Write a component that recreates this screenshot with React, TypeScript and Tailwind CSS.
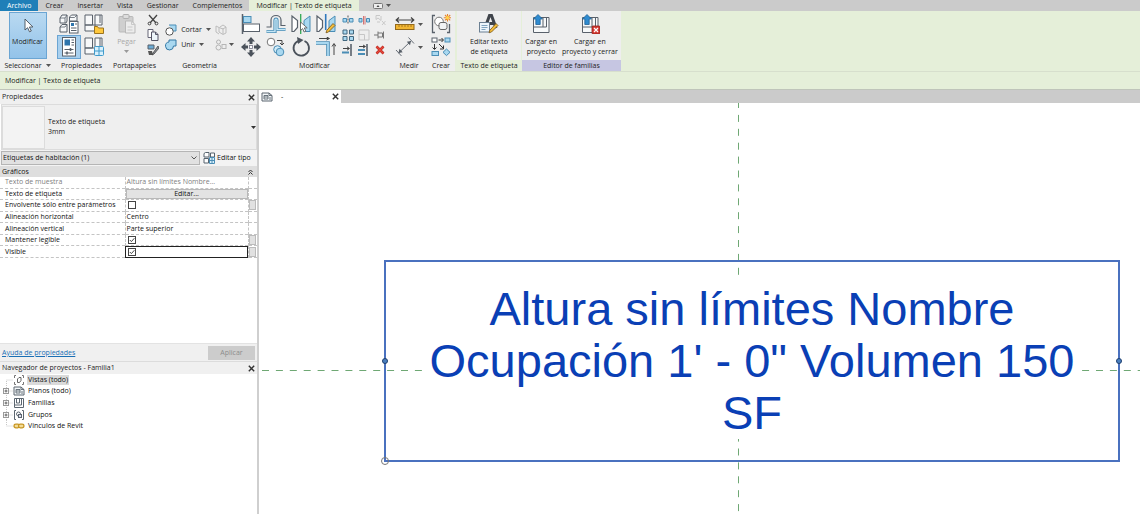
import { useState, type ReactNode } from 'react'
import clsx from 'clsx'

const BLUE = '#a9d8f0'
const BLUE_LINE = '#4a8db5'
const INK = '#59616b'

function Icon({ size = 20, className, children }: { size?: number; className?: string; children: ReactNode }) {
  return (
    <svg
      viewBox={`0 0 ${size} ${size}`}
      width={size}
      height={size}
      fill="none"
      aria-hidden="true"
      className={clsx('block shrink-0', className)}
    >
      {children}
    </svg>
  )
}

function Caret({ className = 'fill-[#555]' }: { className?: string }) {
  return (
    <svg viewBox="0 0 5 3" width={5} height={3} aria-hidden="true" className={clsx('shrink-0', className)}>
      <path d="M0 0h5L2.5 3z" />
    </svg>
  )
}

function Close() {
  return (
    <svg viewBox="0 0 7 7" width={7} height={7} aria-hidden="true" className="block">
      <path d="M.8.8l5.4 5.4M6.2.8L.8 6.2" stroke="#333" strokeWidth="1.4" />
    </svg>
  )
}

const CursorIcon = () => (
  <Icon>
    <path d="M7 3v11l2.600-2.300 1.900 4.100 1.800-.8-1.900-4h3.500z" fill="#fff" stroke="#46505a" strokeWidth=".9" />
  </Icon>
)

/* Propiedades */
const CategoryIcon = () => (
  <Icon>
    <path d="M1 4l2-3h5v6L7 9H1zM10.500 3l2-2h5.500v6h-7.500zM1 13l2-2.500h5V18H1z" fill="#f6f8fa" stroke={INK} />
    <path d="M1 4h5l2-3M6 4v5M10.500 3.500h5l2.500-2.500M1 13h5l2-2.500" stroke={INK} strokeWidth=".8" />
    <rect x="10.500" y="7.500" width="8.500" height="11.500" fill="#fff" stroke={INK} />
    <rect x="12" y="9" width="3" height="3" fill="#2d74ac" />
    <path d="M16 10h2M12 14h5.500M12 16.500h5.500" stroke={INK} />
  </Icon>
)
const FamilyTypeIcon = () => (
  <Icon>
    <path d="M1 1h7.500v10H1zM11 1h7v10h-7zM1 11h10v6H1z" fill="#f8f9fa" stroke={INK} />
    <path d="M16 1v8" stroke={INK} />
    <path d="M10.500 12.500h3l1 1.500h5v5.500h-9z" fill="#ffc83d" stroke="#9c7420" />
  </Icon>
)
const PropertiesIcon = () => (
  <Icon>
    <rect x="3.500" y=".5" width="13" height="18.500" fill="#fff" stroke={INK} />
    <rect x="5.500" y="2.500" width="5.500" height="6" fill="#2d74ac" />
    <path d="M12.500 3h2.500M12.500 5.500h2.500M12.500 8h2.500M5.500 12.500h9M5.500 16h9" stroke={INK} />
    <path d="M11.500 11v3M8 14.500v3" stroke={INK} strokeWidth="1.600" />
  </Icon>
)
const TypePropsIcon = () => (
  <Icon>
    <path d="M1 1h7.500v10H1zM11 1h7v9h-7zM1 11h10v6H1z" fill="#f8f9fa" stroke={INK} />
    <path d="M16 1v8" stroke={INK} />
    <rect x="10.500" y="9.500" width="9" height="9" rx="1" fill="#d8f0fc" stroke="#3f9acb" />
    <path d="M15 9.500v9M10.500 14h9" stroke="#3f9acb" />
  </Icon>
)

/* Portapapeles */
const PasteIcon = () => (
  <Icon>
    <rect x="2" y="2.500" width="14" height="15.500" rx="1" fill="#cfcfcf" stroke="#b9b9b9" />
    <rect x="6" y=".5" width="6" height="4" rx="1" fill="#ddd" stroke="#b0b0b0" />
    <path d="M8.500 7h6l3.500 3.500V19H8.500z" fill="#ececec" stroke="#b9b9b9" />
    <path d="M14.500 7v3.500H18M10.500 13h5M10.500 16h5" stroke="#c8c8c8" />
  </Icon>
)
const CutIcon = () => (
  <Icon size={12}>
    <path d="M2 1l7 8M10 1L3 9" stroke="#444" strokeWidth="1.300" />
    <circle cx="2.500" cy="9.500" r="1.400" stroke="#444" />
    <circle cx="9.500" cy="9.500" r="1.400" stroke="#444" />
  </Icon>
)
const CopyClipIcon = () => (
  <Icon size={12}>
    <path d="M1 .5h5v8H1z" fill="#fff" stroke="#667" />
    <path d="M4.500 3h4l2.500 2.500v6H4.500z" fill="#eef6fb" stroke="#556" />
    <path d="M8.500 3v2.500H11" stroke="#556" />
  </Icon>
)
const MatchIcon = () => (
  <Icon size={12}>
    <path d="M1 1h6v4H1z" fill="#6aaad4" stroke={INK} />
    <path d="M1 7h4l1 4H2z" fill="#555" />
    <path d="M11 2L6 9l-1 2 2-1 5-6z" fill="#8a8f96" stroke="#444" strokeWidth=".8" />
  </Icon>
)

/* Geometria */
const CutGeometryIcon = () => (
  <Icon size={12}>
    <path d="M4 1h7v6H8" fill={BLUE} stroke={BLUE_LINE} />
    <circle cx="4.500" cy="7.500" r="3.700" fill="#fff" stroke="#555" />
  </Icon>
)
const JoinGeometryIcon = () => (
  <Icon size={12}>
    <path d="M4 1h7v6H8.500a4 4 0 1 1-4.500-4z" fill={BLUE} stroke="#3478a5" />
  </Icon>
)
const CopeIcon = () => (
  <Icon size={12}>
    <path d="M1 2l3 1.500V8l4 2.500L11 9V3L8 1 5 3M1 2v6l3 2M8 4v6M4 3.500L8 5l3-2" stroke="#bcbcbc" />
  </Icon>
)
const SplitFaceIcon = () => (
  <Icon size={12}>
    <circle cx="3.500" cy="3" r="2" stroke="#b5b5b5" />
    <circle cx="3.500" cy="8.500" r="2.500" stroke="#b5b5b5" />
    <rect x="7" y="5.500" width="4" height="4" stroke="#b5b5b5" />
  </Icon>
)

/* Modificar */
const AlignIcon = () => (
  <Icon>
    <path d="M1.500 0v20" stroke={INK} strokeWidth="1.500" />
    <rect x="2.500" y="2.500" width="7.500" height="6" fill={BLUE} stroke={BLUE_LINE} />
    <rect x="2.500" y="10" width="16" height="7.500" fill="#fff" stroke={INK} />
  </Icon>
)
const OffsetIcon = () => (
  <Icon>
    <path d="M.5 13H5V6c0-6 10-6 10 0v5.500h4.500" stroke={INK} strokeWidth="1.200" />
    <path d="M.5 17.500H9V6.500c0-1.800 2-1.800 2 0v9h8.500" stroke={BLUE_LINE} strokeWidth="3.200" />
    <path d="M.5 17.500H9V6.500c0-1.800 2-1.800 2 0v9h8.500" stroke="#c6e7f6" strokeWidth="1.400" />
  </Icon>
)
const MirrorAxisIcon = () => (
  <Icon>
    <path d="M1 2v15.500h2l3.500-4V6.500z" fill="#fff" stroke={INK} strokeWidth="1.200" />
    <path d="M19 2v15.500h-6V6.500z" fill={BLUE} stroke={BLUE_LINE} />
    <path d="M9.700 0v20" stroke="#32a852" strokeWidth="1.300" />
    <path d="M9.500 8v8.500l2.100-1.900 1.600 3.400 1.700-.8-1.600-3.300h2.900z" fill="#fff" stroke="#555" strokeWidth=".8" />
  </Icon>
)
const MirrorDrawIcon = () => (
  <Icon>
    <path d="M1 2v15.500h2l3.500-4V6.500z" fill="#fff" stroke={INK} strokeWidth="1.200" />
    <path d="M19 2v15.500h-6V6.500z" fill={BLUE} stroke={BLUE_LINE} />
    <path d="M9.700 0v16" stroke="#2f78bd" strokeWidth="1.600" />
    <path d="M17 9.500l2 2-6.500 6.500-2.500.8.800-2.500z" fill="#f5bd3a" stroke="#765418" strokeWidth=".8" />
  </Icon>
)
const MoveIcon = () => (
  <Icon>
    <path
      d="M10 0l4 4.500h-2.500V7h-3V4.500H6zM10 20l4-4.500h-2.500V13h-3v2.500H6zM0 10l4.500-4v2.500H7v3H4.500V14zM20 10l-4.500-4v2.500H13v3h2.500V14z"
      fill="#4b525b"
    />
    <rect x="8.500" y="8.500" width="3" height="3" fill="#fff" stroke="#778" strokeWidth=".8" />
  </Icon>
)
const CopyIcon = () => (
  <Icon>
    <circle cx="5" cy="5" r="3.800" fill="#fff" stroke="#777" />
    <path d="M11 3.500h5v4M14 6l2 2 2-2" stroke="#444" />
    <circle cx="11.500" cy="12.500" r="3.800" fill="#d3ecf8" stroke={BLUE_LINE} />
    <circle cx="14" cy="15" r="3.800" fill={BLUE} stroke={BLUE_LINE} />
  </Icon>
)
const RotateIcon = () => (
  <Icon>
    <path d="M7.500 3.800A7.700 7.700 0 1 0 13.500 4" stroke="#4b525b" strokeWidth="1.800" />
    <path d="M6 0l6.500 3L7 7z" fill="#4b525b" />
  </Icon>
)
const TrimCornerIcon = () => (
  <Icon>
    <path d="M0 6h12v13" stroke={BLUE_LINE} strokeWidth="3.600" />
    <path d="M0 6h12v13" stroke={BLUE} strokeWidth="1.800" />
    <path d="M3 1.500h10M10.500 0l3 1.500-3 1.500M18 18V7M16 9.500l2-3 2 3" stroke="#444" />
  </Icon>
)
const SplitIcon = () => (
  <Icon size={12}>
    <path d="M1 4.500h3.500v3.500H1zM7.500 4.500H11v3.500H7.500z" fill={BLUE} stroke={BLUE_LINE} />
    <path d="M6 1.500v9" stroke="#555" strokeDasharray="2 1" />
  </Icon>
)
const SplitGapIcon = () => (
  <Icon size={12}>
    <path d="M1 4.500h3v3.500H1zM8.500 4.500h3v3.500h-3z" fill={BLUE} stroke={BLUE_LINE} />
    <path d="M5.500 2v8.500M7 2v8.500" stroke="#c55" strokeWidth=".8" />
  </Icon>
)
const UnpinIcon = () => (
  <Icon size={12}>
    <path d="M2 1.500h4M2 1.500v4l2-1.500 3 2.500V2M8 7l3.500 4M11.500 7L8 11M3 8h3" stroke="#c8c8c8" />
  </Icon>
)
const ArrayIcon = () => (
  <Icon size={12}>
    <path d="M1 1h4v4H1zM7.500 1h4v4h-4zM1 7.500h4v4H1zM7.500 7.500h4v4h-4z" fill={BLUE} stroke="#42677e" />
  </Icon>
)
const ScaleIcon = () => (
  <Icon size={12}>
    <path d="M1 1h10v10H1zM1 5.500h5.500V11" stroke="#c6c6c6" />
  </Icon>
)
const PinIcon = () => (
  <Icon size={12}>
    <path d="M0 6h4M4 2.500v7M4 4h4.500v4H4M9.500 2.500v7" stroke="#777" />
  </Icon>
)
const TrimOneIcon = () => (
  <Icon size={12}>
    <path d="M0 8.500h7" stroke={BLUE_LINE} strokeWidth="2" />
    <path d="M9 0v12" stroke={INK} strokeWidth="1.600" />
    <path d="M1 4.500h6M5 2.800L7.500 4.500 5 6.200" stroke="#444" />
  </Icon>
)
const TrimManyIcon = () => (
  <Icon size={12}>
    <path d="M0 6h7M0 10h7" stroke={BLUE_LINE} strokeWidth="2" />
    <path d="M9 0v12" stroke={INK} strokeWidth="1.600" />
    <path d="M1 2.500h6M5 1l2.500 1.500L5 4" stroke="#444" />
  </Icon>
)
const DeleteIcon = () => (
  <Icon size={12}>
    <path d="M2.500 2.500l7 7M9.500 2.500l-7 7" stroke="#b5281e" strokeWidth="2.600" />
    <path d="M2.500 2.500l7 7M9.500 2.500l-7 7" stroke="#e8483c" strokeWidth="1.400" />
  </Icon>
)

/* Medir, Crear */
const MeasureIcon = () => (
  <Icon>
    <path d="M1 6h18M4 3.500L1.200 6 4 8.500M16 3.500L18.800 6 16 8.500" stroke="#444" strokeWidth="1.200" />
    <rect x=".5" y="10.500" width="18.500" height="5" fill="#f2b632" stroke="#94691a" />
    <path d="M4 11v2M7 11v2M10 11v2M13 11v2M16 11v2" stroke="#94691a" strokeWidth=".8" />
  </Icon>
)
const AlignedDimIcon = () => (
  <Icon>
    <path d="M3.500 16L16 4M1 13l5.500 6M13.500.5l5.500 6" stroke="#666d76" />
    <path d="M3.500 16l1-4.200 3.200 3.400zM16 4l-4.200.8 3.200 3.400z" fill="#555d66" />
  </Icon>
)
const CreateGroupIcon = () => (
  <Icon>
    <path d="M4 1.500H1.500v17H4M16 18.500h2.500V10" stroke={INK} strokeWidth="1.300" />
    <circle cx="8" cy="7.500" r="4.300" fill="#fff" stroke="#777" />
    <rect x="8" y="8.500" width="8" height="7" rx="2" fill="#f1f3f5" stroke="#666" />
    <path d="M16.500 0v7.500M12.800 3.700h7.200M14 1l5.200 5.400M19.200 1L14 6.400" stroke="#e8862c" strokeWidth="1.100" />
    <circle cx="16.500" cy="3.700" r="1.700" fill="#ffd24a" />
  </Icon>
)
const CreateSimilarIcon = () => (
  <Icon>
    <rect x="1" y="1" width="5" height="4" fill="#fff" stroke={INK} />
    <rect x="14" y="1" width="5" height="4" fill={BLUE} stroke={BLUE_LINE} />
    <rect x="1" y="14.500" width="6.500" height="4" fill={BLUE} stroke={BLUE_LINE} />
    <path d="M15.500 12l3.500 3.300-3.500 3.300-3.500-3.300z" fill={BLUE} stroke={BLUE_LINE} />
    <path d="M7.500 3H12M10.500 1l2 2-2 2M3.500 7v5M1.500 10.500l2 2 2-2M8 7l4 4M12.500 8.500V12H9" stroke="#333" />
  </Icon>
)
const EditLabelIcon = () => (
  <Icon>
    <path d="M6 14L10.500 1.500h2L17 14M8.500 9.500h6.500" stroke="#3f444b" strokeWidth="3" />
    <rect x=".5" y="8.500" width="10" height="9.500" fill="#eef6fc" stroke="#6b7f92" />
    <path d="M2.500 11.500h6M2.500 13.500h6M2.500 15.500h4" stroke="#6690b0" strokeWidth=".8" />
    <path d="M17 9.500l2 2-6.500 6.500-2.500.8.800-2.500z" fill="#f5bd3a" stroke="#765418" strokeWidth=".8" />
  </Icon>
)
const LoadIcon = ({ close = false }: { close?: boolean }) => (
  <Icon>
    <path d="M2.500 3.500h15.500v15h-15.500z" fill="#f7f9fa" stroke={INK} />
    <path d="M12 3.500v9.500h-9.500M15.500 3.500V13H12" stroke={INK} />
    <path d="M7 .5l4.500 4.500H9.200v5.500H4.800V5H2.500z" fill="#2f8bd0" stroke="#1f6298" strokeWidth=".8" />
    {close && (
      <>
        <rect x="12" y="12" width="8" height="8" rx="1" fill="#d33a32" stroke="#8f1d18" strokeWidth=".8" />
        <path d="M14 14l4 4M18 14l-4 4" stroke="#fff" strokeWidth="1.200" />
      </>
    )}
  </Icon>
)

/* Navegador */
const ViewsIcon = () => (
  <Icon size={12}>
    <path d="M3 1.500H1.500v2.500M1.500 8v2.500H3M9 1.500h1.500v2.500M10.500 8v2.500H9" stroke="#777" />
    <path d="M4.500 5L6 3.500h2v3L6.500 8.500h-2z" stroke="#666" />
  </Icon>
)
const SheetIcon = () => (
  <Icon size={12}>
    <path d="M1 2h7l3 2.500V10H1z" fill="#f4f7f9" stroke="#5c6670" />
    <path d="M8 2v2.500h3M3 4.500h4v3.500H3zM9 6v3M3 6h4" stroke="#5c6670" strokeWidth=".9" />
  </Icon>
)
const FamiliesIcon = () => (
  <Icon size={12}>
    <path d="M1.500 1.500h9v9h-9z" fill="#fff" stroke="#5c6670" />
    <path d="M3.500 1.500V6h3V1.500M8.500 1.500V8h-7" stroke="#5c6670" />
  </Icon>
)
const GroupsIcon = () => (
  <Icon size={12}>
    <path d="M3 1.500H1.500v9H3M9 1.500h1.500v9H9" stroke="#5c6670" />
    <circle cx="5.500" cy="5" r="2" stroke="#5c6670" />
    <rect x="5.500" y="5.500" width="3" height="3" fill="#dde" stroke="#5c6670" />
  </Icon>
)
const LinkIcon = () => (
  <Icon size={12}>
    <rect x="1" y="4.200" width="5.500" height="3.600" rx="1.800" fill="#f3dc98" stroke="#c79520" strokeWidth="1.300" />
    <rect x="5.500" y="4.200" width="5.500" height="3.600" rx="1.800" fill="#f3dc98" stroke="#c79520" strokeWidth="1.300" />
  </Icon>
)
const EditTypeIcon = () => (
  <Icon size={12}>
    <path d="M1 1.500L2.500.5H6V5H1zM7.500 1h4v4h-4zM1 6.500h4.500V11H1z" fill="#fff" stroke="#56636e" />
    <path d="M6.500 5.500h5v6h-5zM9 5.500v6M6.500 8.500h5" fill="#d8f0fc" stroke={BLUE_LINE} />
  </Icon>
)

function Panel({
  title,
  className,
  titleClass,
  bodyClass,
  children,
}: {
  title: ReactNode
  className: string
  titleClass?: string
  bodyClass?: string
  children: ReactNode
}) {
  return (
    <section className={clsx('flex shrink-0 flex-col bg-[#eeeeee]', className)}>
      <div className={clsx('flex h-[49px] justify-center pt-[3px]', bodyClass)}>{children}</div>
      <h2 className={clsx('flex h-[11px] items-center justify-center gap-1 whitespace-nowrap', titleClass)}>{title}</h2>
    </section>
  )
}

function Tool({ label, children }: { label: string; children: ReactNode }) {
  return (
    <button type="button" aria-label={label} className="flex items-center justify-center">
      {children}
    </button>
  )
}

const tabs = ['Crear', 'Insertar', 'Vista', 'Gestionar', 'Complementos']

const bigTools = [
  { label: 'Alinear', icon: AlignIcon },
  { label: 'Desfase', icon: OffsetIcon },
  { label: 'Simetría, elegir eje', icon: MirrorAxisIcon },
  { label: 'Simetría, dibujar eje', icon: MirrorDrawIcon },
  { label: 'Mover', icon: MoveIcon },
  { label: 'Copiar', icon: CopyIcon },
  { label: 'Rotar', icon: RotateIcon },
  { label: 'Recortar en esquina', icon: TrimCornerIcon },
]

const smallTools = [
  { label: 'Dividir elemento', icon: SplitIcon },
  { label: 'Dividir con hueco', icon: SplitGapIcon },
  { label: 'Desbloquear', icon: UnpinIcon },
  { label: 'Matriz', icon: ArrayIcon },
  { label: 'Escala', icon: ScaleIcon },
  { label: 'Bloquear', icon: PinIcon },
  { label: 'Recortar un elemento', icon: TrimOneIcon },
  { label: 'Recortar varios elementos', icon: TrimManyIcon },
  { label: 'Suprimir', icon: DeleteIcon },
]

function Ribbon() {
  return (
    <header className="bg-[#e5efd9]">
      <nav className="flex h-[11px] items-center bg-[#cbcbcb]">
        <button type="button" className="h-full bg-[#1f7fb8] px-[7px] text-white">
          Archivo
        </button>
        {tabs.map((tab) => (
          <button key={tab} type="button" className="h-full px-[7px]">
            {tab}
          </button>
        ))}
        <button type="button" className="h-full bg-[#e5efd9] px-[7px]">
          Modificar | Texto de etiqueta
        </button>
        <button type="button" aria-label="Minimizar cinta" className="ml-[14px] flex items-center gap-[3px]">
          <svg viewBox="0 0 10 6" width={10} height={6} aria-hidden="true">
            <rect x=".5" y=".5" width="9" height="5" rx="1" fill="#eee" stroke="#777" />
            <path d="M3.500 4L5 2l1.500 2z" fill="#444" />
          </svg>
          <Caret />
        </button>
      </nav>

      <div className="flex h-[61px] border-b border-[#d7dfcd]">
        <Panel
          className="w-[55px]"
          bodyClass="pt-px!"
          title={
            <>
              Seleccionar <Caret />
            </>
          }
        >
          <button
            type="button"
            className="flex h-[47px] w-[38px] flex-col items-center gap-px border border-[#6ba5d3] bg-linear-to-b from-[#b9d9f1] to-[#93c3e9] pt-[3px]"
          >
            <CursorIcon />
            Modificar
          </button>
        </Panel>

        <Panel className="w-[53px]" title="Propiedades">
          <div className="grid grid-cols-[24px_24px] grid-rows-[20px_24px] gap-x-px gap-y-px">
            <Tool label="Categoría y parámetros">
              <CategoryIcon />
            </Tool>
            <Tool label="Tipos de familia">
              <FamilyTypeIcon />
            </Tool>
            <button
              type="button"
              aria-label="Propiedades"
              className="flex items-center justify-center border border-[#6ba5d3] bg-[#a9d0ee]"
            >
              <PropertiesIcon />
            </button>
            <Tool label="Propiedades de tipo">
              <TypePropsIcon />
            </Tool>
          </div>
        </Panel>

        <Panel className="w-[53px]" title="Portapapeles" bodyClass="gap-1">
          <button type="button" className="flex w-8 flex-col items-center gap-[3px] text-[#a8a8a8]">
            <PasteIcon />
            Pegar
            <Caret className="fill-[#999]" />
          </button>
          <div className="flex flex-col gap-[3px]">
            <Tool label="Cortar al portapapeles">
              <CutIcon />
            </Tool>
            <Tool label="Copiar al portapapeles">
              <CopyClipIcon />
            </Tool>
            <Tool label="Igualar tipo">
              <MatchIcon />
            </Tool>
          </div>
        </Panel>

        <Panel className="w-[77px]" title="Geometría" bodyClass="items-center gap-1">
          <div className="flex flex-col gap-[3px]">
            <button type="button" className="flex h-3 items-center gap-1">
              <CutGeometryIcon />
              Cortar
              <Caret />
            </button>
            <button type="button" className="flex h-3 items-center gap-1">
              <JoinGeometryIcon />
              Unir
              <Caret />
            </button>
          </div>
          <div className="flex flex-col items-start gap-[3px]">
            <Tool label="Recorte de viga">
              <CopeIcon />
            </Tool>
            <button type="button" aria-label="Dividir cara" className="flex items-center gap-[2px]">
              <SplitFaceIcon />
              <Caret />
            </button>
          </div>
        </Panel>

        <Panel className="w-[153px]" title="Modificar" bodyClass="gap-1">
          <div className="grid grid-cols-[20px_20px_20px_20px] grid-rows-[20px_20px] gap-x-[5px] gap-y-[3px]">
            {bigTools.map(({ label, icon: Glyph }) => (
              <Tool key={label} label={label}>
                <Glyph />
              </Tool>
            ))}
          </div>
          <div className="grid grid-cols-[16px_16px_16px] grid-rows-[12px_12px_12px] gap-y-[3px]">
            {smallTools.map(({ label, icon: Glyph }) => (
              <Tool key={label} label={label}>
                <Glyph />
              </Tool>
            ))}
          </div>
        </Panel>

        <Panel className="w-[36px]" title="Medir">
          <div className="flex flex-col gap-[3px]">
            <button type="button" aria-label="Medir" className="flex items-center gap-[3px]">
              <MeasureIcon />
              <Caret />
            </button>
            <button type="button" aria-label="Cota alineada" className="flex items-center gap-[3px]">
              <AlignedDimIcon />
              <Caret />
            </button>
          </div>
        </Panel>

        <Panel className="w-[28px]" title="Crear">
          <div className="flex flex-col gap-[3px]">
            <Tool label="Crear grupo">
              <CreateGroupIcon />
            </Tool>
            <Tool label="Crear similar">
              <CreateSimilarIcon />
            </Tool>
          </div>
        </Panel>

        <Panel className="ml-[2px] w-[64px]" titleClass="bg-[#e5efd9]" title="Texto de etiqueta">
          <button type="button" className="flex flex-col items-center gap-[3px]">
            <EditLabelIcon />
            <span>
              Editar texto
              <br />
              de etiqueta
            </span>
          </button>
        </Panel>

        <Panel
          className="ml-px w-[99px]"
          titleClass="bg-[#c6c6e2]"
          bodyClass="gap-[5px]"
          title="Editor de familias"
        >
          <button type="button" className="flex flex-col items-center gap-[3px]">
            <LoadIcon />
            <span>
              Cargar en
              <br />
              proyecto
            </span>
          </button>
          <button type="button" className="flex flex-col items-center gap-[3px]">
            <LoadIcon close />
            <span className="whitespace-nowrap">
              Cargar en
              <br />
              proyecto y cerrar
            </span>
          </button>
        </Panel>
      </div>

      <div className="flex h-[18px] items-center border-b border-[#bfc4ba] px-[5px]">Modificar | Texto de etiqueta</div>
    </header>
  )
}

type Row = { label: string; value?: string; kind: 'muted' | 'button' | 'check' | 'text' }

const rows: Row[] = [
  { label: 'Texto de muestra', value: 'Altura sin límites Nombre...', kind: 'muted' },
  { label: 'Texto de etiqueta', value: 'Editar...', kind: 'button' },
  { label: 'Envolvente sólo entre parámetros', kind: 'check' },
  { label: 'Alineación horizontal', value: 'Centro', kind: 'text' },
  { label: 'Alineación vertical', value: 'Parte superior', kind: 'text' },
  { label: 'Mantener legible', kind: 'check' },
  { label: 'Visible', kind: 'check' },
]

function Properties() {
  const [checked, setChecked] = useState<Record<string, boolean>>({
    'Mantener legible': true,
    Visible: true,
  })

  const toggle = (label: string) => setChecked((prev) => ({ ...prev, [label]: !prev[label] }))

  return (
    <section className="flex h-[271px] flex-col">
      <div className="flex h-[14px] items-center justify-between bg-[#f0f0f0] pr-[2px] pl-[2px]">
        <h2>Propiedades</h2>
        <button type="button" aria-label="Cerrar propiedades">
          <Close />
        </button>
      </div>

      <button
        type="button"
        className="ml-px flex h-[46px] shrink-0 items-center border border-[#dcdcdc] bg-[#efefef] text-left"
      >
        <span className="mr-[3px] h-[43px] w-[43px] border border-[#dcdcdc] bg-[#f3f3f3]" />
        <span className="flex-1">
          Texto de etiqueta
          <br />
          3mm
        </span>
        <Caret className="fill-[#333]" />
      </button>

      <div className="flex h-4 shrink-0 items-center bg-[#f3f3f3] pl-px text-[#111]">
        <div className="relative flex h-[14px] w-[199px] items-center border border-[#b5b5b5] bg-[#e1e1e1]">
          <select aria-label="Categoría" className="h-full w-full appearance-none pl-px">
            <option>Etiquetas de habitación (1)</option>
          </select>
          <svg viewBox="0 0 6 4" width={6} height={4} aria-hidden="true" className="pointer-events-none absolute right-[2px]">
            <path d="M.5.5L3 3 5.500.5" fill="none" stroke="#555" />
          </svg>
        </div>
        <button type="button" className="ml-[3px] flex items-center gap-[2px] whitespace-nowrap">
          <EditTypeIcon />
          Editar tipo
        </button>
      </div>

      <div className="flex h-[11px] shrink-0 items-center justify-between bg-[#dedede] pr-1 pl-[2px] text-[#111]">
        <h3>Gráficos</h3>
        <svg viewBox="0 0 5 6" width={5} height={6} aria-hidden="true">
          <path d="M.5 3l2-2 2 2M.5 5.500l2-2 2 2" fill="none" stroke="#333" />
        </svg>
      </div>

      <table className="h-[81px] w-full table-fixed border-collapse text-[#111]">
        <colgroup>
          <col className="w-[125px]" />
          <col />
          <col className="w-[9px]" />
        </colgroup>
        <tbody>
          {rows.map(({ label, value, kind }) => (
            <tr
              key={label}
              className={clsx('border-b border-dashed border-[#c4c4c4]', kind === 'muted' && 'text-[#808080]')}
            >
              <td className="border-r border-dashed border-[#c4c4c4] p-0 pl-[5px] whitespace-nowrap">
                {kind === 'check' ? <label htmlFor={label}>{label}</label> : label}
              </td>
              <td
                className={clsx(
                  'border-r border-dashed border-[#c4c4c4] p-0',
                  label === 'Visible' && 'outline outline-[#222] -outline-offset-1'
                )}
              >
                {kind === 'button' && (
                  <button type="button" className="block h-[10px] w-full border border-[#b8b8b8] bg-[#e3e3e3] leading-[8px]">
                    {value}
                  </button>
                )}
                {kind === 'check' && (
                  <span className="relative ml-[2px] block size-[8px]">
                    <input
                      id={label}
                      type="checkbox"
                      checked={!!checked[label]}
                      onChange={() => toggle(label)}
                      className="block size-[8px] appearance-none border border-[#444] bg-white"
                    />
                    {checked[label] && (
                      <svg viewBox="0 0 8 8" aria-hidden="true" className="pointer-events-none absolute inset-0">
                        <path d="M1.800 4l1.600 1.600L6.400 2.200" fill="none" stroke="#333" strokeWidth=".9" />
                      </svg>
                    )}
                  </span>
                )}
                {(kind === 'text' || kind === 'muted') && <span className="pl-px">{value}</span>}
              </td>
              <td className="p-0">
                {kind === 'check' && (
                  <button
                    type="button"
                    aria-label={`Asociar ${label}`}
                    className="mx-auto block h-[10px] w-[7px] border border-[#bbb] bg-[#e1e1e1]"
                  />
                )}
              </td>
            </tr>
          ))}
        </tbody>
      </table>

      <div className="mt-auto flex h-[18px] shrink-0 items-center justify-between border-t border-[#e3e3e3] bg-[#f0f0f0] pr-[2px] pl-[2px]">
        <a href="#ayuda" className="text-[#1a6fb5] underline">
          Ayuda de propiedades
        </a>
        <button type="button" disabled className="h-[14px] w-[47px] bg-[#cccccc] text-[#8c8c8c]">
          Aplicar
        </button>
      </div>
    </section>
  )
}

const tree = [
  { label: 'Vistas (todo)', icon: ViewsIcon, selected: true },
  { label: 'Planos (todo)', icon: SheetIcon, expandable: true },
  { label: 'Familias', icon: FamiliesIcon, expandable: true },
  { label: 'Grupos', icon: GroupsIcon, expandable: true },
  { label: 'Vínculos de Revit', icon: LinkIcon },
]

function Browser() {
  return (
    <section className="border-t border-[#dcdcdc]">
      <div className="flex h-3 items-center justify-between bg-[#f0f0f0] pr-[2px] pl-[2px]">
        <h2>Navegador de proyectos - Familia1</h2>
        <button type="button" aria-label="Cerrar navegador">
          <Close />
        </button>
      </div>
      <ul className="flex h-[58px] flex-col text-[#111]">
        {tree.map(({ label, icon: Glyph, selected, expandable }) => (
          <li key={label} className="flex min-h-0 flex-1 items-center pl-[3px]">
            <svg viewBox="0 0 10 12" width={10} height={12} fill="none" aria-hidden="true" className="shrink-0">
              <path
                d={selected ? 'M3.500 12V6H10' : expandable ? 'M3.500 0v12M3.500 6H10' : 'M3.500 0v6H10'}
                stroke="#c8c8c8"
                strokeDasharray="1 1"
              />
              {expandable && (
                <>
                  <rect x=".5" y="3.500" width="5" height="5" fill="#fff" stroke="#999" />
                  <path d="M1.500 6h3M3 4.500v3" stroke="#444" strokeWidth=".8" />
                </>
              )}
            </svg>
            <Glyph />
            <button type="button" className={clsx('ml-[2px] px-px', selected && 'bg-[#dadada]')}>
              {label}
            </button>
          </li>
        ))}
      </ul>
    </section>
  )
}

function Canvas() {
  return (
    <main className="flex min-w-0 flex-1 flex-col">
      <div className="flex h-[13px] bg-[#cbcbcb]">
        <div className="flex w-[82px] items-center justify-between bg-white pr-[2px] pl-[2px]">
          <span className="flex items-center gap-2">
            <SheetIcon />-
          </span>
          <button type="button" aria-label="Cerrar vista">
            <Close />
          </button>
        </div>
      </div>

      <div className="relative flex-1 bg-white pt-[157px] pr-5 pb-[52px] pl-[125px]">
        {/* reference planes */}
        <svg aria-hidden="true" className="absolute inset-0 h-full w-full">
          <path d="M479.500 -2V600" stroke="#6fa874" strokeDasharray="7 6.9" />
          <path d="M3 267.500H1800" stroke="#6fa874" strokeDasharray="7 6.9" />
        </svg>

        <div className="relative h-[202px] border-2 border-[#4a71bf] pt-[14px]">
          <p className="mx-auto w-fit max-w-[656px] bg-white px-1 pt-[7px] text-center font-['Liberation_Sans',Arial,sans-serif] text-[47px] leading-[52px] text-[#0a3fb5]">
            Altura sin límites Nombre Ocupación 1' - 0" Volumen 150 SF
          </p>
          <span className="absolute top-[96px] -left-[4px] size-[6px] rounded-full border border-[#1f3f6e] bg-[#4a7fc0]" />
          <span className="absolute top-[96px] -right-[4px] size-[6px] rounded-full border border-[#1f3f6e] bg-[#4a7fc0]" />
          <span className="absolute -bottom-[5px] -left-[5px] size-[8px] rounded-full border border-[#777]" />
        </div>
      </div>
    </main>
  )
}

export default function App() {
  return (
    <div className="flex min-h-screen flex-col overflow-hidden bg-white font-['Open_Sans','Noto_Sans',sans-serif] text-[7px] leading-[10px] text-[#222]">
      <Ribbon />
      <div className="flex flex-1">
        <aside className="w-[259px] shrink-0 border-r-2 border-[#cfcfcf] bg-white">
          <Properties />
          <Browser />
        </aside>
        <Canvas />
      </div>
    </div>
  )
}
